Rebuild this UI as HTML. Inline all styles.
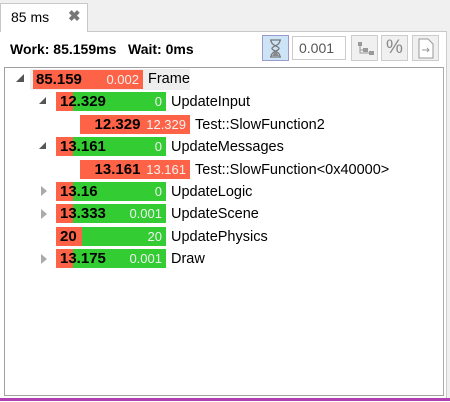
<!DOCTYPE html><html><head><style>
body{margin:0;width:450px;height:402px;background:#fff;font-family:"Liberation Sans",sans-serif;position:relative;overflow:hidden}
.a{position:absolute}
.bar{position:absolute;height:19px;background:#33cc33;overflow:hidden}
.r{position:absolute;left:0;top:0;bottom:0;background:#ff6347}
.v{position:absolute;left:4px;top:1px;font-weight:bold;font-size:15px;color:#000}
.s{position:absolute;right:4px;top:2px;font-size:13px;color:#f0f0f0}
.l{position:absolute;font-size:14.5px;color:#000}
.tri{position:absolute;width:0;height:0}
.btn{position:absolute;top:35px;width:27px;height:26px;border:1px solid #ccc;background:#f0f0f0;box-sizing:border-box;color:#888}
</style></head><body>
<div class="a" style="left:0;top:0;width:450px;height:31px;background:#f0f0f0;border-bottom:1px solid #c8c8c8"></div>
<div class="a" style="left:0;top:3px;width:88px;height:29px;background:#fff;border:1px solid #c8c8c8;border-bottom:none;box-sizing:border-box"></div>
<div class="a" style="left:11px;top:9px;font-size:14px">85 ms</div>
<div class="a" style="left:68px;top:7px;font-size:15px;color:#777;font-weight:bold">✖</div>
<div class="a" style="left:446px;top:31px;width:4px;height:368px;background:#f0f0f0;border-left:1px solid #ccc"></div>
<div class="a" style="left:10px;top:41px;font-size:14px;font-weight:bold">Work: 85.159ms &nbsp; Wait: 0ms</div>
<div class="btn" style="left:262px;background:#cde4f7;border-color:#99c"><svg width="25" height="24"><path d="M7 4h11M7 21h11M8 4c0 6 8 6 8 8.5S8 15 8 21M17 4c0 6-8 6-8 8.5S17 15 17 21" stroke="#777" stroke-width="1.3" fill="none"/><path d="M9 20l3.5-5 3.5 5z" fill="#888"/></svg></div>
<div class="a" style="left:292px;top:36px;width:54px;height:24px;border:1px solid #ccc;box-sizing:border-box;font-size:14px;color:#555;padding:3px 0 0 6px">0.001</div>
<div class="btn" style="left:351px"><svg width="25" height="24"><rect x="6" y="6" width="4" height="4" fill="#999"/><rect x="11" y="12" width="5" height="4" fill="#999"/><rect x="17" y="15" width="5" height="4" fill="#999"/><path d="M8 10v7h9M8 14h3" stroke="#999" fill="none"/></svg></div>
<div class="btn" style="left:381px;font-size:19px;text-align:center;padding-top:1px">%</div>
<div class="btn" style="left:412px"><svg width="25" height="24"><path d="M6 3h9l5 5v14H6z" fill="#fff" stroke="#999"/><path d="M9 14h7m-2-2l2 2-2 2" stroke="#999" fill="none"/></svg></div>
<div class="a" style="left:4px;top:67px;width:440px;height:329px;border:1px solid #a0a0a0;border-right-color:#aaa;box-sizing:border-box"></div>
<div class="a" style="left:0;top:398px;width:450px;height:3px;background:#b040b0"></div>

<div class="a" style="left:30px;top:69px;width:160px;height:21px;background:#eee"></div>
<div class="tri" style="left:16px;top:74px;border-left:8px solid transparent;border-bottom:8px solid #555"></div>
<div class="bar" style="left:33px;top:70px;width:110px;background:#ff6347"><span class="v" style="left:3px">85.159</span><span class="s">0.002</span></div><div class="l" style="left:148px;top:71px">Frame</div>

<div class="tri" style="left:39px;top:97px;border-left:7px solid transparent;border-bottom:7px solid #555"></div>
<div class="bar" style="left:56px;top:92px;width:110px"><div class="r" style="width:17px"></div><span class="v">12.329</span><span class="s">0</span></div><div class="l" style="left:171px;top:94px">UpdateInput</div>

<div class="bar" style="left:80px;top:115px;width:110px;background:#ff6347"><span class="v" style="left:0;width:75px;text-align:center">12.329</span><span class="s">12.329</span></div><div class="l" style="left:195px;top:117px">Test::SlowFunction2</div>

<div class="tri" style="left:39px;top:142px;border-left:7px solid transparent;border-bottom:7px solid #555"></div>
<div class="bar" style="left:56px;top:137px;width:110px"><div class="r" style="width:17px"></div><span class="v">13.161</span><span class="s">0</span></div><div class="l" style="left:171px;top:139px">UpdateMessages</div>

<div class="bar" style="left:80px;top:160px;width:110px;background:#ff6347"><span class="v" style="left:0;width:75px;text-align:center">13.161</span><span class="s">13.161</span></div><div class="l" style="left:195px;top:162px">Test::SlowFunction&lt;0x40000&gt;</div>

<div class="tri" style="left:41px;top:186px;border-top:5px solid transparent;border-bottom:5px solid transparent;border-left:6px solid #aaa"></div>
<div class="bar" style="left:56px;top:182px;width:110px"><div class="r" style="width:17px"></div><span class="v">13.16</span><span class="s">0</span></div><div class="l" style="left:171px;top:184px">UpdateLogic</div>

<div class="tri" style="left:41px;top:209px;border-top:5px solid transparent;border-bottom:5px solid transparent;border-left:6px solid #aaa"></div>
<div class="bar" style="left:56px;top:204px;width:110px"><div class="r" style="width:17px"></div><span class="v">13.333</span><span class="s">0.001</span></div><div class="l" style="left:171px;top:206px">UpdateScene</div>

<div class="bar" style="left:56px;top:227px;width:110px"><div class="r" style="width:26px"></div><span class="v" style="left:4px">20</span><span class="s">20</span></div><div class="l" style="left:171px;top:229px">UpdatePhysics</div>

<div class="tri" style="left:41px;top:254px;border-top:5px solid transparent;border-bottom:5px solid transparent;border-left:6px solid #aaa"></div>
<div class="bar" style="left:56px;top:249px;width:110px"><div class="r" style="width:17px"></div><span class="v">13.175</span><span class="s">0.001</span></div><div class="l" style="left:171px;top:251px">Draw</div>
</body></html>
